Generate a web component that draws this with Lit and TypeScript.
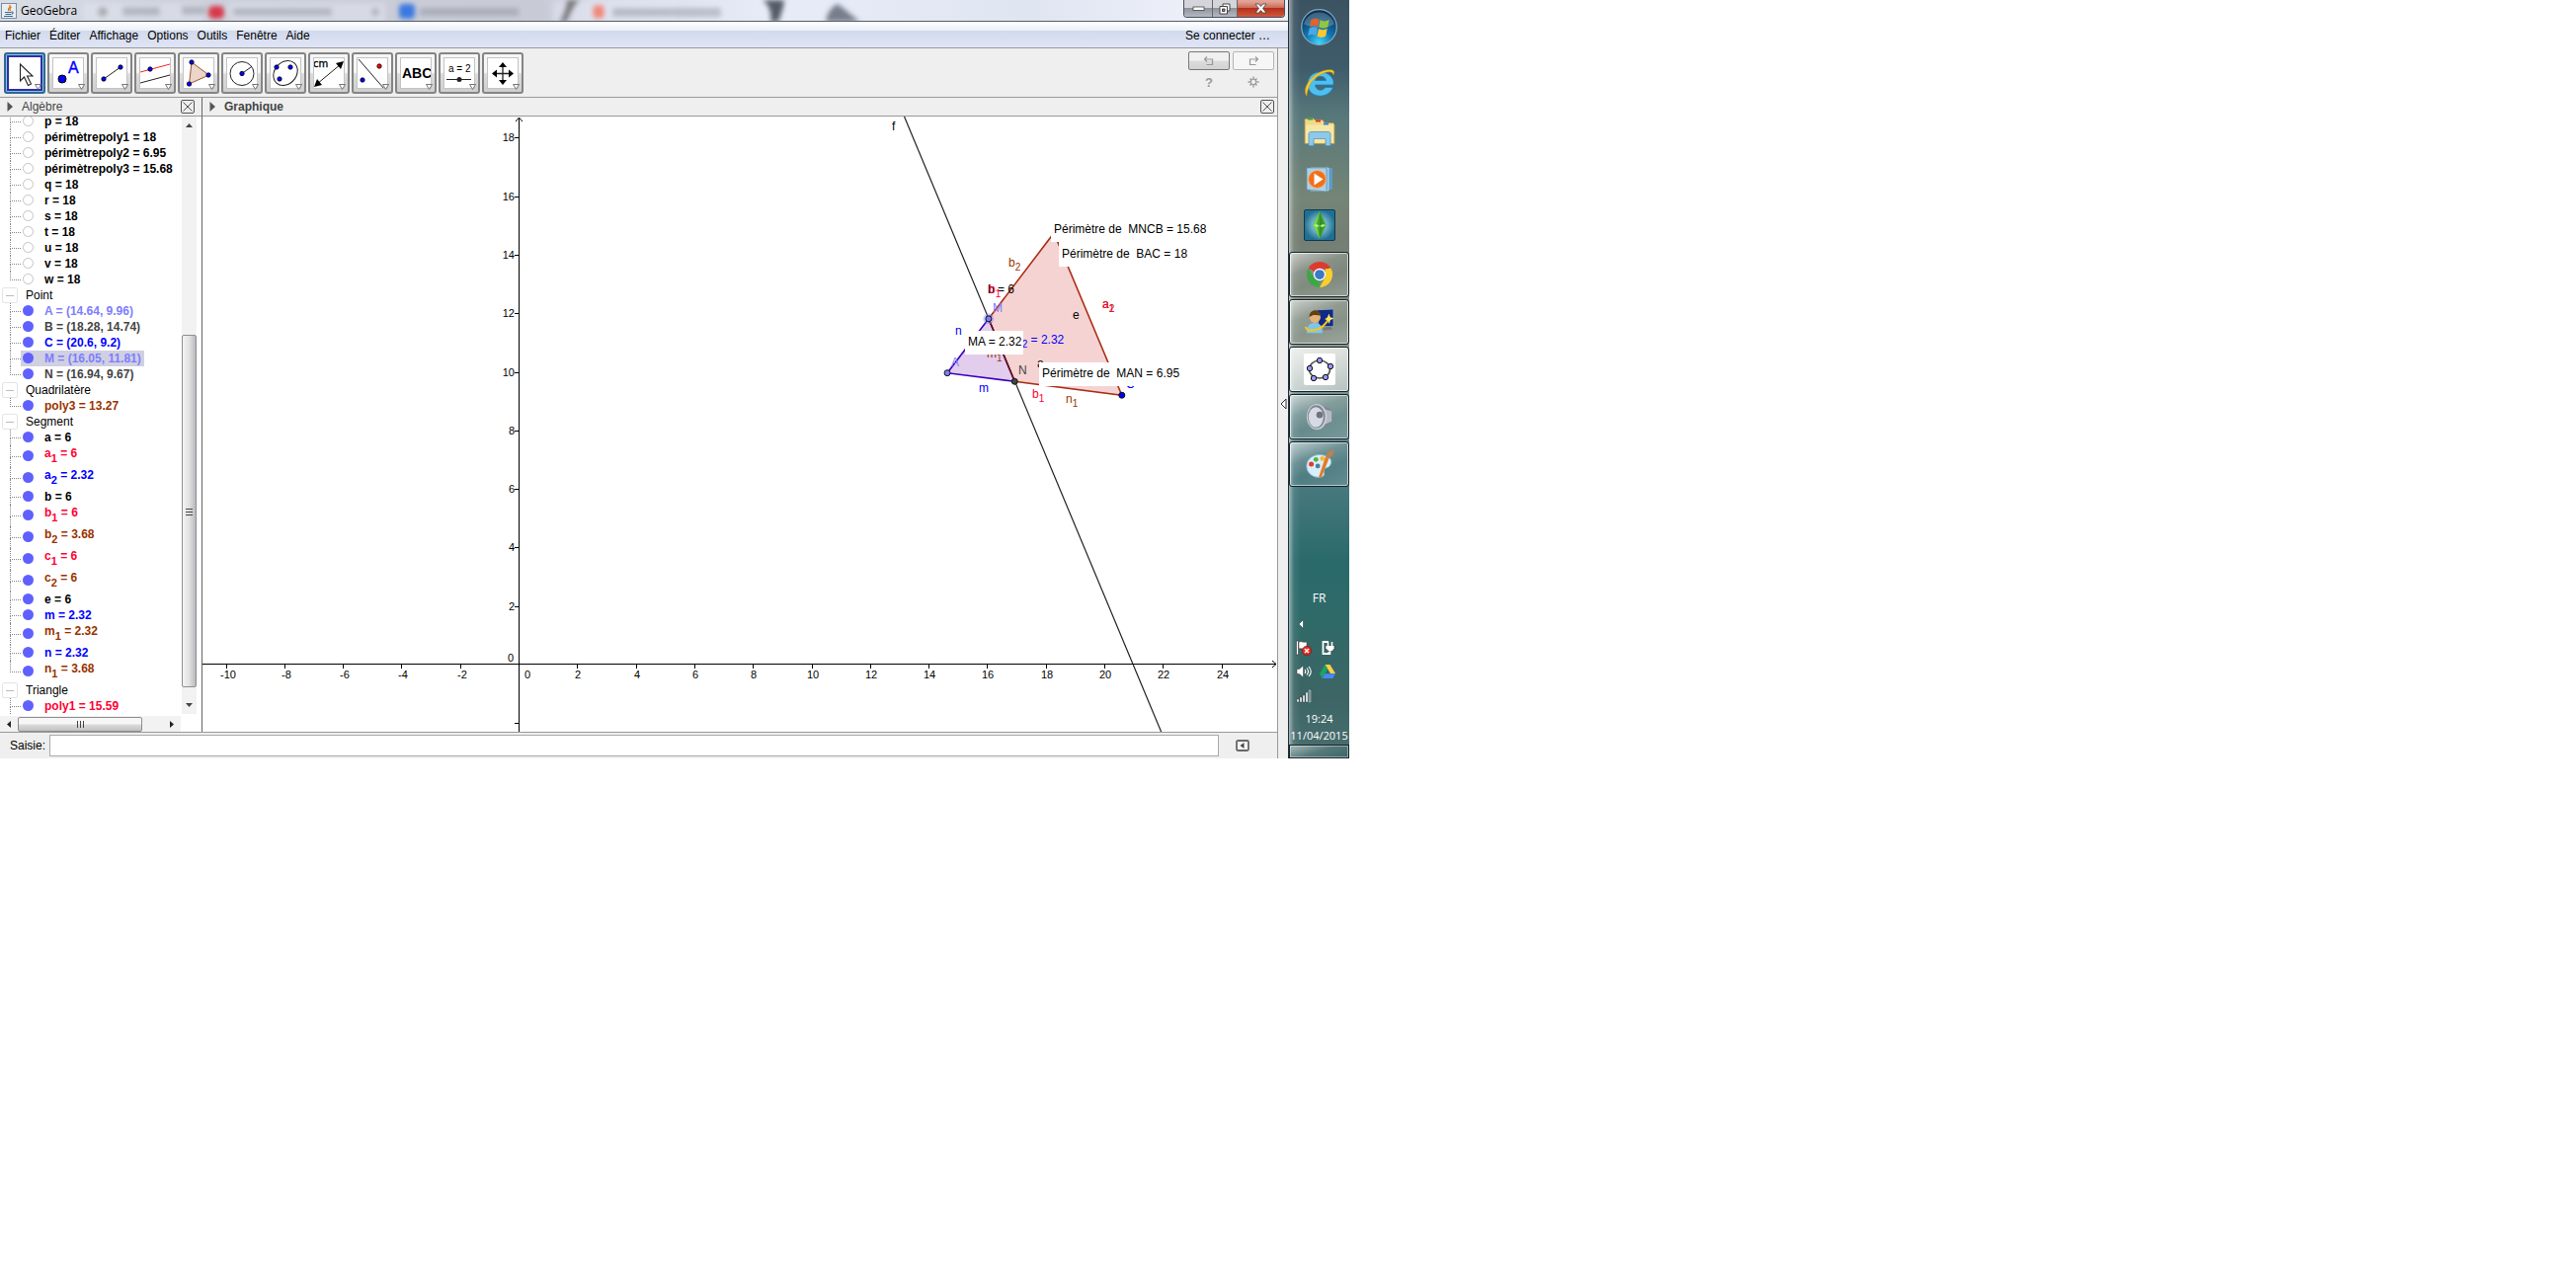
import { LitElement, html, svg, css } from "lit";
import { customElement } from "lit/decorators.js";
import { classMap } from "lit/directives/class-map.js";

interface Item {
  name: string;
  sub?: string;
  value: string;
  tone: string;
  hidden?: boolean;
  selected?: boolean;
}
interface Group {
  title?: string;
  more?: boolean;
  items: Item[];
}

const num = (name: string, value = "18"): Item => ({ name, value, tone: "black", hidden: true });
const obj = (name: string, value: string, tone: string, sub?: string): Item => ({ name, value, tone, sub });

const GROUPS: Group[] = [
  {
    items: [
      num("p"), num("périmètrepoly1"), num("périmètrepoly2", "6.95"), num("périmètrepoly3", "15.68"),
      num("q"), num("r"), num("s"), num("t"), num("u"), num("v"), num("w"),
    ],
  },
  {
    title: "Point",
    items: [
      obj("A", "(14.64, 9.96)", "pale"),
      obj("B", "(18.28, 14.74)", "grey"),
      obj("C", "(20.6, 9.2)", "blue"),
      { ...obj("M", "(16.05, 11.81)", "pale"), selected: true },
      obj("N", "(16.94, 9.67)", "grey"),
    ],
  },
  { title: "Quadrilatère", items: [obj("poly3", "13.27", "brown")] },
  {
    title: "Segment",
    items: [
      obj("a", "6", "black"), obj("a", "6", "red", "1"), obj("a", "2.32", "blue", "2"),
      obj("b", "6", "black"), obj("b", "6", "red", "1"), obj("b", "3.68", "brown", "2"),
      obj("c", "6", "red", "1"), obj("c", "6", "brown", "2"), obj("e", "6", "black"),
      obj("m", "2.32", "blue"), obj("m", "2.32", "brown", "1"), obj("n", "2.32", "blue"),
      obj("n", "3.68", "brown", "1"),
    ],
  },
  { title: "Triangle", more: true, items: [obj("poly1", "15.59", "red")] },
];

/* Graph coordinates to canvas pixels */
const UNIT = 29.65;
const gx = (x: number) => 320 + UNIT * x;
const gy = (y: number) => 555 - UNIT * y;

const A = [gx(14.64), gy(9.96)];
const B = [gx(18.28), gy(14.74)];
const C = [gx(20.6), gy(9.2)];
const M = [gx(16.05), gy(11.81)];
const N = [gx(16.94), gy(9.67)];
const pts = (...p: number[][]) => p.map((q) => q.join(",")).join(" ");

const dot = (x: number, y: number, fill = "#0000ff", r = 2.2) =>
  svg`<circle cx=${x} cy=${y} r=${r} fill=${fill} stroke="#000" stroke-width="0.8"></circle>`;

const TOOLS: { label: string; art: unknown }[] = [
  {
    label: "Déplacer",
    art: svg`<path d="M11.5 7v17l4-4 4 8.500 3-1.500-4-8h5.500z" fill="#fff" stroke="#222" stroke-width="1.100"/>`,
  },
  {
    label: "Point",
    art: svg`<circle cx="10" cy="22" r="4" fill="#00f" stroke="#000" stroke-width="1"/><text class="ta" x="16" y="15.500">A</text>`,
  },
  {
    label: "Segment",
    art: svg`<path d="M8 22L25 10" stroke="#222" fill="none"/>${dot(8, 22)}${dot(25, 10)}`,
  },
  {
    label: "Parallèle",
    art: svg`<path d="M1 15L31 7" stroke="#f22" fill="none"/><path d="M1 26L31 18" stroke="#222" fill="none"/>${dot(11, 12)}`,
  },
  {
    label: "Polygone",
    art: svg`<path d="M9 5L26.500 18 6.500 27z" stroke="#a0522d" fill="#ecd5c9"/>${dot(9, 5)}${dot(26, 18)}${dot(6.5, 27)}`,
  },
  {
    label: "Cercle",
    art: svg`<circle cx="16" cy="16.500" r="12" stroke="#222" fill="none"/><path d="M16 16.500L25 10" stroke="#222"/>${dot(16, 16.5)}`,
  },
  {
    label: "Conique",
    art: svg`<ellipse cx="16" cy="16" rx="13.500" ry="11" transform="rotate(-48 16 16)" stroke="#222" fill="none"/>${dot(7, 10)}${dot(21, 10)}${dot(10, 22)}`,
  },
  {
    label: "Distance",
    art: svg`<path d="M4 27L28 7" stroke="#222"/><path d="M1 30l3-8 5 6zM31 4l-3 8-5-6z" fill="#000"/><text class="tcm" x="0" y="10">cm</text>`,
  },
  {
    label: "Symétrie",
    art: svg`<path d="M2 2L28 32" stroke="#222"/>${dot(6, 23)}${dot(23, 9, "#f00")}`,
  },
  { label: "Texte", art: svg`<text class="tabc" x="2" y="21">ABC</text>` },
  {
    label: "Curseur",
    art: svg`<text class="tval" x="5" y="15">a = 2</text><path d="M3 22.500h25" stroke="#222"/><circle cx="16" cy="22.500" r="2.500" fill="#222"/>`,
  },
  {
    label: "Déplacer la vue",
    art: svg`<path d="M16 8v17M8 16.500h17" stroke="#222" stroke-width="1.300"/><path d="M16 5l4 5h-8zM16 28l4-5h-8zM5 16.500l5-4v8zM27 16.500l-5-4v8z" fill="#000"/>`,
  },
];

@customElement("gg-toolbar")
export class GgToolbar extends LitElement {
  static styles = css`
    :host { display: flex; justify-content: space-between; padding: 3px 3px 3px 4px; background: #efefef; border-bottom: 1px solid #999; }
    .tools { display: flex; gap: 2px; padding-top: 1px; }
    .tool { width: 42px; height: 42px; padding: 3px; box-sizing: border-box; border: 2px solid #858585; border-radius: 3px; background: linear-gradient(#f6f6f6 0 48%, #dcdcdc 52%, #cfcfcf); position: relative; }
    .tool svg { display: block; width: 32px; height: 32px; background: #fff; outline: 1px solid #c4c4c4; outline-offset: -1px; }
    .tool.on { border-color: #2c6a94; background: #2f2fa8; padding: 3px; box-shadow: inset 0 0 0 1px #8fc4e4; }
    .tool.on svg { outline: none; }
    .drop { position: absolute; right: 2px; bottom: 2px; }
    .tool .drop svg { width: 7px; height: 6px; background: none; outline: none; }
    .ta { font: 16px "Liberation Sans", Arial, sans-serif; fill: #00f; stroke: #00f; stroke-width: 0.4px; }
    .tcm { font: 10px "DejaVu Sans", sans-serif; stroke: #000; stroke-width: 0.3px; }
    .tabc { font: bold 14px "Liberation Sans", Arial, sans-serif; }
    .tval { font: 10px "Liberation Sans", Arial, sans-serif; }
    .extra { display: grid; grid-template-columns: 42px 42px; gap: 3px; align-content: start; }
    .hist { height: 19px; padding: 0; border: 1px solid #777; border-radius: 2px; background: linear-gradient(#f0f0f0 0 48%, #dcdcdc 52%, #d2d2d2); display: grid; place-items: center; }
    .hist.off { border-color: #b5b5b5; background: #f6f6f6; }
    .mini { height: 18px; padding: 0; border: 0; background: none; color: #999; font: bold 13px "Liberation Sans", Arial, sans-serif; display: grid; place-items: center; }
  `;
  render() {
    return html`
      <div class="tools">
        ${TOOLS.map(
          (t, i) => html`<button class=${classMap({ tool: true, on: i === 0 })} aria-label=${t.label}>
            <svg viewBox="0 0 32 32">${t.art}</svg>
            <span class="drop"><svg viewBox="0 0 7 6"><path d="M0.500 0.500h6L3.500 5.500z" fill="#fff" stroke="#666" stroke-width="0.900"/></svg></span>
          </button>`
        )}
      </div>
      <div class="extra">
        <button class="hist" aria-label="Annuler"><svg width="12" height="10" viewBox="0 0 12 10"><path d="M4 0.500L1.500 3 4 5.500M1.500 3h8v5.500h-6" fill="none" stroke="#999" stroke-width="1.200"/></svg></button>
        <button class="hist off" aria-label="Refaire"><svg width="12" height="10" viewBox="0 0 12 10"><path d="M8 0.500L10.500 3 8 5.500M10.500 3h-8v5.500h6" fill="none" stroke="#999" stroke-width="1.200"/></svg></button>
        <button class="mini" aria-label="Aide">?</button>
        <button class="mini" aria-label="Préférences"><svg width="12" height="12" viewBox="0 0 12 12"><circle cx="6" cy="6" r="2.800" fill="none" stroke="#999" stroke-width="1.300"/><path d="M6 0.500v2M6 9.500v2M0.500 6h2M9.500 6h2M2.500 2.500l1.200 1.200M8.300 8.300l1.200 1.200M2.500 9.500l1.200-1.200M8.300 3.700l1.200-1.200" stroke="#999" stroke-width="1.400"/></svg></button>
      </div>`;
  }
}

@customElement("gg-algebra")
export class GgAlgebra extends LitElement {
  static styles = css`
    :host { flex: 1; min-height: 0; display: grid; grid-template: minmax(0, 1fr) 18px / 1fr 15px 5px; background: #fff; font: 12px/16px "Liberation Sans", Arial, sans-serif; }
    .tree { overflow: hidden; min-width: 0; }
    .list { margin: 0; padding: 0; list-style: none; }
    .tree > .list:first-child { margin-top: -3px; }
    .title { display: flex; align-items: center; gap: 8px; height: 16px; padding-left: 2px; font-size: 12px; }
    .knob { width: 16px; height: 16px; padding: 0; box-sizing: border-box; border: 1px solid #e4e4e4; border-radius: 2px; background: #fff; display: grid; place-items: center; }
    .knob::before { content: ""; width: 8px; height: 1px; background: #bbb; }
    .row { display: flex; height: 16px; padding-left: 10px; }
    .row.tall { height: 22px; }
    .branch { display: flex; flex-direction: column; width: 11px; }
    .branch::before { content: ""; flex: 1; border-left: 1px dotted #888; border-bottom: 1px dotted #888; }
    .branch::after { content: ""; flex: 1; border-left: 1px dotted #888; }
    .row.end .branch::after { border-color: transparent; }
    .entry { display: flex; align-items: center; gap: 11px; padding: 0 3px 0 2px; font-weight: bold; white-space: pre; }
    .entry.selected { background: #d0d0e2; }
    .dot { appearance: none; margin: 0 0 2px; width: 11px; height: 11px; box-sizing: border-box; border-radius: 50%; border: 1px solid #c4c4c4; background: #fff; }
    .dot:checked { border: 0; background: #6060ff; }
    .tall .text { padding-bottom: 6px; }
    .sub { font-size: 11px; position: relative; top: 5px; }
    .black { color: #000; } .grey { color: #444; } .blue { color: #00f; } .pale { color: #7d7dff; } .red { color: #ff0033; } .brown { color: #993300; }
    .bar { background: #f2f2f2; display: flex; align-items: center; }
    .bar.v { flex-direction: column; }
    .bar.h { margin: 2px 1px 0 0; }
    .arrow { flex: 0 0 18px; display: grid; place-items: center; }
    .thumb { border: 1px solid #8e8e8e; border-radius: 2px; box-sizing: border-box; display: grid; place-items: center; }
    .v .thumb { width: 15px; flex: 356; background: linear-gradient(90deg, #f4f4f4, #e2e2e2 50%, #b9b9be); }
    .v .before { flex: 204; } .v .after { flex: 9; }
    .h .thumb { height: 15px; flex: 126; background: linear-gradient(#f6f6f6 0 45%, #dadada 55%, #c2c2c6); }
    .h .after { flex: 21; }
  `;
  private row(it: Item, end: boolean) {
    return html`<li class=${classMap({ row: true, tall: !!it.sub, end })}>
      <span class="branch"></span>
      <label class=${classMap({ entry: true, selected: !!it.selected, [it.tone]: true })}
        ><input class="dot" type="checkbox" .checked=${!it.hidden} /><span class="text">${it.name}${it.sub ? html`<span class="sub">${it.sub}</span>` : ""} = ${it.value}</span></label>
    </li>`;
  }
  render() {
    return html`
      <div class="tree">
        ${GROUPS.map(
          (g) => html`${g.title ? html`<div class="title"><button class="knob" aria-label="Replier"></button><span>${g.title}</span></div>` : ""}<ul class="list">
              ${g.items.map((it, i) => this.row(it, i === g.items.length - 1 && !g.more))}
            </ul>`
        )}
      </div>
      <div class="bar v">
        <span class="arrow"><svg width="7" height="4" viewBox="0 0 7 4"><path d="M0 4L3.500 0 7 4z" fill="#444"/></svg></span>
        <span class="before"></span>
        <span class="thumb"><svg width="7" height="8" viewBox="0 0 7 8"><path d="M0 1.500h7M0 4.500h7M0 7.500h7" stroke="#444"/></svg></span>
        <span class="after"></span>
        <span class="arrow"><svg width="7" height="4" viewBox="0 0 7 4"><path d="M0 0L3.500 4 7 0z" fill="#444"/></svg></span>
      </div>
      <span></span>
      <div class="bar h">
        <span class="arrow"><svg width="4" height="7" viewBox="0 0 4 7"><path d="M4 0L0 3.500 4 7z" fill="#222"/></svg></span>
        <span class="thumb"><svg width="8" height="7" viewBox="0 0 8 7"><path d="M1.500 0v7M4.500 0v7M7.500 0v7" stroke="#444"/></svg></span>
        <span class="after"></span>
        <span class="arrow"><svg width="4" height="7" viewBox="0 0 4 7"><path d="M0 0l4 3.500L0 7z" fill="#222"/></svg></span>
      </div>`;
  }
}

const XT = [-10, -8, -6, -4, -2, 2, 4, 6, 8, 10, 12, 14, 16, 18, 20, 22, 24];
const YT = [-2, 2, 4, 6, 8, 10, 12, 14, 16, 18];

const label = (x: number, y: number, text: string, tone: string, sub = "", rest = "") =>
  svg`<text class=${"t " + tone} x=${x} y=${y}>${text}${sub ? svg`<tspan class="s" dy="4">${sub}</tspan>` : ""}${rest ? svg`<tspan dy="-4">${rest}</tspan>` : ""}</text>`;

@customElement("gg-canvas")
export class GgCanvas extends LitElement {
  static styles = css`
    :host { flex: 1; min-height: 0; display: block; background: #fff; overflow: hidden; }
    .plot { display: block; width: 100%; height: 100%; }
    .t { font: 12px "Liberation Sans", Arial, sans-serif; white-space: pre; }
    .s { font-size: 10px; }
    .n { font: 11px "Liberation Sans", Arial, sans-serif; }
    .mid { text-anchor: middle; } .end { text-anchor: end; }
    .black { fill: #000; } .grey { fill: #444; } .blue { fill: #00f; } .pale { fill: #7d7dff; } .red { fill: #ff0033; } .brown { fill: #993300; }
  `;
  render() {
    return html`<svg class="plot">
      <polygon points=${pts(M, B, C, N)} fill="#f5d3d3"></polygon>
      <polygon points=${pts(A, M, N)} fill="#e2cdec"></polygon>
      <path d="M0 554.500H1087M320.500 2V640M1083 551l4 3.500-4 3.500M317 5l3.500-4 3.500 4" stroke="#000" fill="none"></path>
      ${XT.map((t) => svg`<path d=${`M${Math.round(gx(t))}.5 555v4`} stroke="#000"></path><text class="n mid" x=${Math.round(gx(t)) + (t < 0 ? 2 : 1)} y="569">${t}</text>`)}
      ${YT.map((t) => svg`<path d=${`M316 ${Math.round(gy(t))}.5h4`} stroke="#000"></path>${t > 0 ? svg`<text class="n end" x="316" y=${Math.round(gy(t)) + 4}>${t}</text>` : ""}`)}
      <text class="n end" x="315" y="552">0</text>
      <text class="n" x="326" y="569">0</text>
      <path d="M710.500 0L971 624" stroke="#222" stroke-width="1.200" fill="none"></path>
      <polygon points=${pts(M, B, C, N)} fill="none" stroke="#aa2e14" stroke-width="1.600"></polygon>
      <path d=${`M${N}L${A}L${M}`} fill="none" stroke="#3a00c4" stroke-width="1.600"></path>
      <path d=${`M${M}L${N}`} stroke="#5a1030" stroke-width="1.500"></path>
      ${label(816, 152, "b", "brown", "2")}
      ${label(795, 179, "b = 6", "black")}
      ${label(796, 179, "b", "red", "1")}
      ${label(800, 198, "M", "pale")}
      ${label(762, 221, "n", "blue")}
      ${label(758, 253, "A", "pale")}
      ${label(786, 279, "m", "blue")}
      ${label(826, 261, "N", "grey")}
      ${label(794, 244, "m", "brown", "1")}
      ${label(823, 230, "a", "blue", "2", " = 2.32")}
      ${label(881, 205, "e", "black")}
      ${label(845, 254, "a", "black")}
      ${label(911, 194, "a", "brown", "2")}
      ${label(911, 194, "a", "red", "1")}
      ${label(840, 285, "b", "red", "1")}
      ${label(874, 290, "n", "brown", "1")}
      ${label(935, 275, "C", "blue")}
      ${label(698, 14, "f", "black")}
      <circle cx=${M[0]} cy=${M[1]} r="5.500" fill="#7d7dff" opacity="0.400"></circle>
      ${[[A, "#7d7dff"], [M, "#7d7dff"], [N, "#444"], [C, "#00f"]].map(
        ([p, c]) => svg`<circle cx=${(p as number[])[0]} cy=${(p as number[])[1]} r="3" fill=${c} stroke="#111" stroke-width="1"></circle>`
      )}
      <path d="M859 101h163v26H859zM867 127h136v25H867zM772 217h59v24H772zM847 249h144v24H847z" fill="#fff"></path>
      ${label(862, 118, "Périmètre de  MNCB = 15.68", "black")}
      ${label(870, 143, "Périmètre de  BAC = 18", "black")}
      ${label(775, 232, "MA = 2.32", "black")}
      ${label(850, 264, "Périmètre de  MAN = 6.95", "black")}
    </svg>`;
  }
}

const OPEN: { label: string; art: unknown }[] = [
  {
    label: "Google Chrome",
    art: svg`<path d="M16 16L3.900 9A14 14 0 0 1 28.100 9L28 10H16z" fill="#dd3b2e"/><path d="M16 30A14 14 0 0 1 3.900 9L10 19.500l6 3z" fill="#3fa648"/><path d="M28.100 9A14 14 0 0 1 16 30l6-11V10z" fill="#f9cf2c"/><circle cx="16" cy="16" r="6.600" fill="#fff"/><circle cx="16" cy="16" r="5.200" fill="#3b78c8"/>`,
  },
  {
    label: "Messagerie",
    art: svg`<path d="M13 3l18-1v19H15z" fill="#0d2a86" stroke="#9aa6b4"/><path d="M20 22l8-1 2 3-10 1z" fill="#777"/><path d="M2 28c0-9 4-11 9-11s8 3 8 11z" fill="#7fc6e8"/><circle cx="11" cy="11" r="6" fill="#e4b276"/><path d="M5 11c-1-9 12-10 12-2-4 0-8-2-12 2z" fill="#5f4115"/><path d="M1 21c0 7 18 6 25-9" fill="none" stroke="#f3c522" stroke-width="2.200"/><path d="M26 7l1.500 4 4 1-4 2-1 4-2-4-3-1 3-2z" fill="#ffe35e"/>`,
  },
  {
    label: "GeoGebra",
    art: svg`<rect width="32" height="32" rx="2" fill="#fff"/><ellipse cx="16" cy="16" rx="10.500" ry="9" fill="none" stroke="#555" stroke-width="1.600"/>${[[16, 7], [27, 13], [22, 24], [10, 25], [6, 15]].map(([x, y]) => svg`<circle cx=${x} cy=${y} r="2.700" fill="#9999ff" stroke="#111"></circle>`)}`,
  },
  {
    label: "Volume",
    art: svg`<path d="M14 3l12 4c5 4 5 14 0 18l-12 4z" fill="#7f8690"/><path d="M22 8l7 2v11l-7 3z" fill="#b4bac4"/><ellipse cx="13" cy="16" rx="11" ry="14" fill="#c9cdd6"/><ellipse cx="12.500" cy="16" rx="9.500" ry="12.500" fill="#7e8594"/><ellipse cx="12" cy="16.500" rx="8" ry="11" fill="#d6dae2"/><circle cx="16" cy="14" r="3.500" fill="#6e7480"/>`,
  },
  {
    label: "Paint",
    art: svg`<path d="M2 18C2 10 10 5 18 6s12 5 10 10-6 3-7 6 2 7-4 8C9 31 2 26 2 18z" fill="#d8eefb" stroke="#8dbbd8"/><circle cx="7" cy="16" r="2.700" fill="#e23b2e"/><circle cx="12" cy="11" r="2.600" fill="#4db53c"/><circle cx="19" cy="10" r="2.600" fill="#f1bd2a"/><circle cx="14" cy="18" r="2.600" fill="#507f97"/><path d="M15 30L22 9l4 1-8 20z" fill="#e67a20"/><path d="M22 9l3-7 7-2-2 6-4 4z" fill="#b98355"/>`,
  },
];

const PINNED: { label: string; art: unknown }[] = [
  {
    label: "Démarrer",
    art: svg`<defs><radialGradient id="o" cx="50%" cy="95%" r="85%"><stop offset="0" stop-color="#3fd8ff"/><stop offset="0.450" stop-color="#1177b4"/><stop offset="1" stop-color="#0b3457"/></radialGradient></defs><circle cx="18" cy="18" r="17.300" fill="url(#o)" stroke="#82a9bd" stroke-width="1.200"/><path d="M3 15A15.500 15.500 0 0 1 33 15C24 20 12 19 3 15z" fill="#fff" opacity="0.220"/><path d="M10 11c3-2 5-2 8-0.500l-1.200 7C14 16 12 16 9 17.500z" fill="#e8602c"/><path d="M19 11c3 1.500 6 1.500 9-0.500l-1.500 7.500c-3 1.500-5.500 1.500-8.500 0z" fill="#8fc740"/><path d="M8.500 19c3-1.500 5-1.500 8 0l-1.500 7.500c-2.500-1.500-5-1.500-8 0z" fill="#4ba8e0"/><path d="M17.500 19.500c3 1.500 5.500 1.500 8.500 0L24.500 27c-3 1.500-5.500 1.500-8.500 0z" fill="#fbc733"/>`,
  },
  {
    label: "Internet Explorer",
    art: svg`<path d="M30 18H11.500c0.500 6 8 7 10 2.500H29.500C25 33 4 32 4 17S26 1 30 14zM11.500 13.500h11c-0.500-5-10-6-11 0z" fill="#4fc0ee" stroke="#1b82c4" stroke-width="0.800"/><path d="M3 29C-4 20 14 0 29 3c2 1 2 3 1 5C30 1 12 6 6 18c-2 5-3 8-3 11z" fill="#f8cb2e" stroke="#c99508" stroke-width="0.500"/>`,
  },
  {
    label: "Explorateur",
    art: svg`<g transform="translate(0 1.500)"><path d="M1 3l8-1 2 2h8l2 3h9l1 2v19H1z" fill="#f1d988" stroke="#b3974c" stroke-width="0.800"/><path d="M2 9h28v18H2z" fill="#f7e7a6"/><path d="M4 2h5v2H4z" fill="#2fa53a"/><path d="M12 4h5v2h-5z" fill="#d23b2c"/><path d="M20 7h5v2h-5z" fill="#2b86d9"/><path d="M5 30V18c0-1 1-2 2-2h18c1 0 2 1 2 2v12h-5v-7H10v7z" fill="#8ec9ea" stroke="#4c97c4" stroke-width="0.800"/></g>`,
  },
  {
    label: "Lecteur Windows Media",
    art: svg`<g transform="translate(1 2)"><path d="M10 4h18v22H10z" fill="#5b9cc8"/><path d="M6 4h18v23H6z" fill="#82bbdc" stroke="#fff" stroke-width="0.500"/><path d="M2 4h20v24L2 26z" fill="#a9d2ea" stroke="#5b92b6" stroke-width="0.700"/><circle cx="12.500" cy="15.500" r="9" fill="#f0701c" stroke="#fbb27a"/><path d="M9.500 9.500v12l9-6z" fill="#fff"/></g>`,
  },
  {
    label: "Les Sims",
    art: svg`<defs><radialGradient id="s"><stop offset="0" stop-color="#b5ecf2"/><stop offset="1" stop-color="#1f6f93"/></radialGradient></defs><rect x="0.500" y="0.500" width="31" height="31" rx="1.500" fill="url(#s)" stroke="#0f3852"/><path d="M16 2l6.500 14L16 30 9.500 16z" fill="#3fa02c"/><path d="M16 2v28L9.500 16z" fill="#78d84e"/><path d="M16 2l3 13-3 15-3-15z" fill="#2a8420" opacity="0.600"/><path d="M9.500 16l3.500-1 3 2 3-2 3.500 1-3.500 2-3-1-3 1z" fill="#b2f07e"/>`,
  },
];

@customElement("win-taskbar")
export class WinTaskbar extends LitElement {
  static styles = css`
    :host { display: flex; flex-direction: column; align-items: stretch; box-sizing: border-box; border-left: 1px solid #20303a; overflow: hidden;
      background: linear-gradient(90deg, rgba(255, 255, 255, 0.5), rgba(255, 255, 255, 0.08) 5px, transparent 12px), linear-gradient(#3c5261 0, #3f5c6b 9%, #56777a 15%, #758576 26%, #747e72 32%, #8b978c 46%, #6f8f8f 54%, #4a7a80 63%, #2a6a6b 74%, #2f6a68 82%, #3d6565 92%, #4a6f70); }
    .btn { border: 0; background: none; padding: 0; display: grid; place-items: center; }
    .pinned { display: flex; flex-direction: column; gap: 16px; padding: 9px 0 11px; }
    .pin { height: 32px; } .pin svg { width: 32px; height: 32px; }
    .pin:first-child { height: 37px; margin-bottom: 6px; } .pin:first-child svg { width: 37px; height: 37px; }
    .open { display: flex; flex-direction: column; gap: 2px; }
    .task { height: 46px; border: 1px solid #16222a; border-radius: 3px; box-shadow: inset 0 0 0 1px rgba(255, 255, 255, 0.6); background: linear-gradient(160deg, rgba(255, 255, 255, 0.6), rgba(255, 255, 255, 0.12) 35%, rgba(255, 255, 255, 0.02) 60%, rgba(255, 255, 255, 0.15)); }
    .task svg { width: 30px; height: 30px; }
    .task.on { background: linear-gradient(160deg, rgba(255, 255, 255, 0.85), rgba(255, 255, 255, 0.45)); }
    .task.on svg { width: 32px; height: 32px; }
    .tray { margin-top: auto; color: #fff; font: 11px/17px "Open Sans", "Noto Sans", sans-serif; text-align: center; }
    .lang { font-size: 12px; padding-bottom: 10px; }
    .icons { display: grid; grid-template-columns: 16px 16px; column-gap: 8px; row-gap: 8px; padding-left: 7px; padding-bottom: 7px; }
    .icons svg { width: 16px; height: 16px; }
    .wide { grid-column: 1 / -1; justify-self: start; }
    .show { width: 100%; height: 14px; margin-top: 1px; display: block; padding: 0; border: 1px solid #16222a; box-shadow: inset 0 0 0 1px rgba(255, 255, 255, 0.4); background: linear-gradient(160deg, #a9bcbb, #55797a 50%, #3c6668); }
  `;
  render() {
    return html`
      <div class="pinned">
        ${PINNED.map((p, i) => html`<button class="btn pin" aria-label=${p.label}><svg viewBox=${i ? "0 0 32 32" : "0 0 36 36"}>${p.art}</svg></button>`)}
      </div>
      <div class="open">
        ${OPEN.map((p, i) => html`<button class=${classMap({ btn: true, task: true, on: i === 2 })} aria-label=${p.label}><svg viewBox="0 0 32 32">${p.art}</svg></button>`)}
      </div>
      <div class="tray">
        <div class="lang">FR</div>
        <div class="icons">
          <svg class="wide" viewBox="0 0 16 16"><path d="M7.500 3.500v9L3 8z" fill="#fff" stroke="#24404a" stroke-width="0.600"/></svg>
          <svg viewBox="0 0 16 16"><path d="M0.500 1h2v14h-2z" fill="#fff" stroke="#222" stroke-width="0.500"/><path d="M3 2c3-1 4 1 8 0v7c-4 1-5-1-8 0z" fill="#fff" stroke="#333" stroke-width="0.500"/><circle cx="11" cy="11" r="4.700" fill="#dc2a22" stroke="#8d0f0a" stroke-width="0.600"/><path d="M9 9l4 4M13 9l-4 4" stroke="#fff" stroke-width="1.600"/></svg>
          <svg viewBox="0 0 16 16"><path d="M9 2H3.500v12h6v-2" fill="none" stroke="#fff" stroke-width="1.800"/><path d="M6 5.500h9v3l-2 3H9L6 8.500z" fill="#fff" stroke="#222" stroke-width="0.600"/><path d="M8.500 2v4M12.500 2v4M10.500 11v4" stroke="#fff" stroke-width="1.500"/></svg>
          <svg viewBox="0 0 16 16"><path d="M1 5.500h2.500L7.500 2v12l-4-3.500H1z" fill="#fff" stroke="#333" stroke-width="0.500"/><path d="M9 6q1.500 2 0 4M11 4.500q3 3.500 0 7M13 3q4.500 5 0 10" fill="none" stroke="#fff" stroke-width="1.100"/></svg>
          <svg viewBox="0 0 16 16"><path d="M5.500 1h5L16 10h-5z" fill="#ffcf48"/><path d="M5.500 1L8 5.500 2.800 15 0 10.300z" fill="#1da462"/><path d="M5.300 10.300H16L13.300 15H2.800z" fill="#4688f4"/></svg>
          <svg viewBox="0 0 16 16"><path d="M1 12h2v3H1zM4 10h2v5H4zM7 8h2v7H7zM10 5h2v10h-2z" fill="#fff" stroke="#233" stroke-width="0.400"/><path d="M13 3h2v12h-2z" fill="#6d8686" stroke="#dde" stroke-width="0.400"/></svg>
        </div>
        <div>19:24</div>
        <div>11/04/2015</div>
        <button class="show" aria-label="Afficher le bureau"></button>
      </div>`;
  }
}

const MENU = ["Fichier", "Éditer", "Affichage", "Options", "Outils", "Fenêtre", "Aide"];
const arrow = html`<svg width="6" height="10" viewBox="0 0 6 10"><path d="M0.500 0v10L6 5z" fill="#555" /></svg>`;
const shut = html`<svg width="14" height="14" viewBox="0 0 14 14"><rect x="0.500" y="0.500" width="13" height="13" rx="1.500" fill="#eee" stroke="#555" /><path d="M2.500 2.500l9 9M11.500 2.500l-9 9" stroke="#555" /></svg>`;

@customElement("app-root")
export class AppRoot extends LitElement {
  static styles = css`
    :host { display: grid; grid-template-columns: 683fr 621fr; background: #fff; min-height: 100vh; align-items: start; font: 12px/16px "Liberation Sans", Arial, sans-serif; color: #000; }
    .desktop { display: grid; grid-template-columns: minmax(0, 1fr) 62px; height: 60vh; }
    .window { display: flex; flex-direction: column; min-width: 0; min-height: 0; }
    .titlebar { height: 22px; display: flex; justify-content: space-between; align-items: flex-start; border-bottom: 1px solid #555b66; box-sizing: border-box; flex: none; position: relative; overflow: hidden; background: linear-gradient(90deg, #d9dde5, #cdd0db 12%, #c8cbd6 42%, #d8dcea 46%, #e8ecf8 60%, #e0e5f2 80%, #eceff8 92%); }
    .glass { position: absolute; inset: 0; width: 100%; height: 100%; }
    .brand { display: flex; align-items: center; gap: 4px; height: 21px; padding-left: 1px; position: relative; font: 12px/20px "Open Sans", "Noto Sans", sans-serif; }
    .controls { display: flex; position: relative; margin-right: 3px; border: 1px solid #4a4f5a; border-top: 0; border-radius: 0 0 4px 4px; overflow: hidden; }
    .ctl { width: 29px; height: 17px; padding: 0; border: 0; border-right: 1px solid #666; display: grid; place-items: center; background: linear-gradient(#d3d5da 0 45%, #8e939d 50%, #b5b9c2); }
    .ctl.mid { width: 25px; }
    .ctl.close { width: 47px; border-right: 0; background: linear-gradient(#e0a396 0 10%, #cd6c5a 45%, #b5301a 50%, #cf5a3c); }
    .menubar { display: flex; justify-content: space-between; height: 26px; flex: none; border-bottom: 1px solid #999; background: linear-gradient(#fff, #eaf0f8 35%, #d3daed 36%, #dfe5f5); }
    .menus { display: flex; gap: 9px; padding-left: 5px; }
    .item { border: 0; background: none; padding: 2px 0 0; font: inherit; color: inherit; }
    .login { margin-right: 18px; }
    .body { flex: 1; min-height: 0; display: grid; grid-template-columns: minmax(0, 1fr) 10px; background: #efefef; }
    .main { display: flex; flex-direction: column; min-width: 0; min-height: 0; border-right: 1px solid #999; }
    .side { display: grid; place-items: center; border: 0; padding: 0; background: none; }
    .panels { flex: 1; min-height: 0; display: grid; grid-template-columns: 204px minmax(0, 1fr); grid-template-rows: minmax(0, 1fr); border-bottom: 1px solid #999; }
    .panel { display: flex; flex-direction: column; min-width: 0; min-height: 0; }
    .panel.graph { border-left: 1px solid #666; }
    .head { display: flex; align-items: center; height: 18px; flex: none; padding: 0 3px 0 7px; border-bottom: 1px solid #999; color: #444; gap: 9px; }
    .alg .head { padding-right: 7px; }
    .name { flex: 1; }
    .name.strong { font-weight: bold; }
    .icon { border: 0; background: none; padding: 0; line-height: 0; }
    .entrybar { display: flex; align-items: center; height: 26px; flex: none; padding: 0 28px 0 10px; }
    .field { flex: 1; min-width: 0; height: 22px; box-sizing: border-box; margin: 0 17px 0 4px; border: 1px solid #aaa; background: #fff; font: inherit; }
  `;
  render() {
    return html`
      <div class="desktop">
        <div class="window">
          <div class="titlebar">
            <svg class="glass" aria-hidden="true">
              <defs><filter id="soft" x="-30%" y="-80%" width="160%" height="260%"><feGaussianBlur stdDeviation="2.500 2.500" /></filter></defs>
              <g filter="url(#soft)">
                <path d="M84 3H206V22H84zM232 3H390V22H232zM560 2H680V22H560z" fill="#e4e7f2" opacity="0.500" />
                <path d="M124 7h38v9h-38zM184 6h24v9h-24zM236 8h100v8H236zM425 8h100v8H425zM620 8h110v9H620z" fill="#7d818f" opacity="0.400" />
                <circle cx="104" cy="12" r="5" fill="#777" opacity="0.500" />
                <circle cx="380" cy="12" r="4" fill="#777" opacity="0.400" />
                <rect x="211" y="6" width="16" height="13" rx="5" fill="#d83848" />
                <rect x="404" y="4" width="16" height="15" rx="4" fill="#3a78e0" />
                <rect x="600" y="5" width="12" height="14" rx="4" fill="#ef8a7a" />
                <path d="M574 22c6-12 8-18 14-22h-14c-2 10-4 16-8 22z" fill="#666" opacity="0.800" />
                <path d="M772 0h22c-1 10-4 16-6 22h-8c2-9-2-18-8-22z" fill="#555b68" />
                <path d="M836 22c2-10 5-14 12-18 8 6 14 11 22 18z" fill="#5d6370" opacity="0.800" />
              </g>
            </svg>
            <div class="brand">
              <svg width="16" height="16" viewBox="0 0 16 16"><rect x="0.500" y="0.500" width="15" height="15" fill="#e9eef4" stroke="#7b8ea3" /><path d="M8.500 2c3 2-3 3-0.500 6M10.500 4c-2 1-2 2-1 4" fill="none" stroke="#e07a1a" stroke-width="1.200" /><path d="M4 9.500h6.500M4.500 11.500h5.500M3 13.500h9M10.500 9c2.500-0.500 2 2 0 2.500" fill="none" stroke="#3d6a94" stroke-width="1.100" /></svg>
              <span>GeoGebra</span>
            </div>
            <div class="controls">
              <button class="ctl" aria-label="Réduire"><svg width="13" height="6" viewBox="0 0 13 6"><rect x="1" y="1" width="11" height="3.500" fill="#fff" stroke="#444" stroke-width="0.800" /></svg></button>
              <button class="ctl mid" aria-label="Niveau inférieur"><svg width="12" height="12" viewBox="0 0 12 12"><path d="M4 1h7v7H4z" fill="#fff" stroke="#444" /><path d="M1 3.500h7.500V11H1z" fill="#fff" stroke="#444" /><path d="M3.500 6h2.500v2.500H3.500z" fill="#888" stroke="#444" /></svg></button>
              <button class="ctl close" aria-label="Fermer"><svg width="13" height="11" viewBox="0 0 13 11"><path d="M1 1h3.500l2 2.500L8.500 1H12L8.500 5.500 12 10H8.500l-2-2.500-2 2.500H1l3.500-4.500z" fill="#fff" stroke="#444" stroke-width="0.800" /></svg></button>
            </div>
          </div>
          <div class="menubar">
            <nav class="menus">${MENU.map((m) => html`<button class="item">${m}</button>`)}</nav>
            <button class="item login">Se connecter …</button>
          </div>
          <div class="body">
            <div class="main">
              <gg-toolbar></gg-toolbar>
              <div class="panels">
                <section class="panel alg">
                  <div class="head">${arrow}<span class="name">Algèbre</span><button class="icon" aria-label="Fermer Algèbre">${shut}</button></div>
                  <gg-algebra></gg-algebra>
                </section>
                <section class="panel graph">
                  <div class="head">${arrow}<span class="name strong">Graphique</span><button class="icon" aria-label="Fermer Graphique">${shut}</button></div>
                  <gg-canvas></gg-canvas>
                </section>
              </div>
              <div class="entrybar">
                <label for="saisie">Saisie:</label>
                <input class="field" id="saisie" type="text" />
                <button class="icon" aria-label="Aide à la saisie"><svg width="14" height="12" viewBox="0 0 14 12"><rect x="1" y="1" width="12" height="10" rx="1.500" fill="#f4f4f4" stroke="#666" stroke-width="1.800" /><path d="M8.500 3v6L4.500 6z" fill="#444" /></svg></button>
              </div>
            </div>
            <button class="side" aria-label="Ouvrir le panneau latéral"><svg width="7" height="12" viewBox="0 0 7 12"><path d="M6 1v10L1 6z" fill="#fff" stroke="#333" /></svg></button>
          </div>
        </div>
        <win-taskbar></win-taskbar>
      </div>`;
  }
}
